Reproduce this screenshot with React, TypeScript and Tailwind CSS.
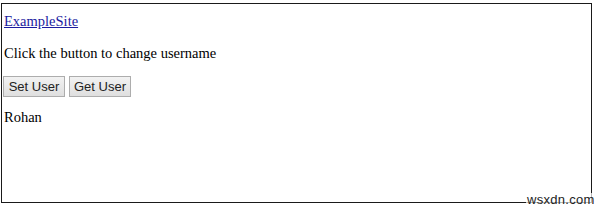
import React, { useState } from 'react';

export default function App() {
  const [user, setUser] = useState('Rohan');

  return (
    <div className="relative w-[600px] h-[211px] bg-white pt-[3px] pl-[1px] font-['Liberation_Serif',serif] text-black">
      <div className="w-[591px] h-[200px] border border-[#1a1a1a] pt-[8px] pl-[1px] flex flex-col">
        <a href="#" className="ml-[1px] text-[14.5px] leading-[18px] text-[#1c1ca0] underline w-fit">
          ExampleSite
        </a>
        <p className="ml-[1px] mt-[14px] text-[14.5px] leading-[18px]">Click the button to change username</p>
        <div className="mt-[14px] flex gap-[4px] font-['Liberation_Sans',sans-serif] text-[13px]">
          <button
            className="h-[21px] w-[62px] border border-[#adadad] bg-gradient-to-b from-[#f2f2f2] to-[#dfdfdf] text-[#222] leading-none"
            onClick={() => setUser('Rohan')}
          >
            Set User
          </button>
          <button
            className="h-[21px] w-[62px] border border-[#adadad] bg-gradient-to-b from-[#f2f2f2] to-[#dfdfdf] text-[#222] leading-none"
            onClick={() => setUser(user)}
          >
            Get User
          </button>
        </div>
        <p className="ml-[1px] mt-[11px] text-[14.5px] leading-[18px]">{user}</p>
      </div>
      <span className="absolute left-[526px] top-[193px] px-[1px] bg-white/70 font-['Liberation_Sans',sans-serif] text-[13px] leading-[13px] text-[#222] tracking-[0.3px]">
        wsxdn.com
      </span>
    </div>
  );
}
